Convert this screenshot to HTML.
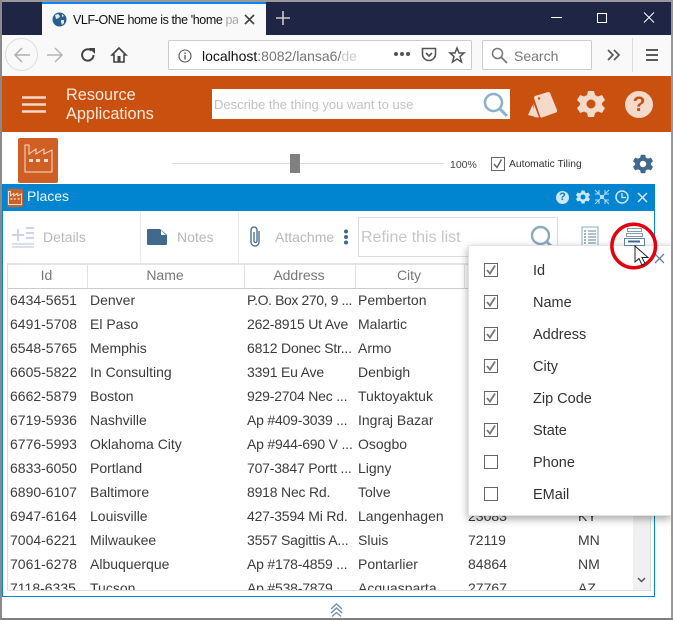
<!DOCTYPE html>
<html><head><meta charset="utf-8"><style>
html,body{margin:0;padding:0}
body{width:673px;height:620px;overflow:hidden;position:relative;background:#fff;font-family:"Liberation Sans",sans-serif;color:#333}
.a{position:absolute}
.t{position:absolute;white-space:nowrap;overflow:hidden}
.r{position:absolute;left:0;width:640px;height:24px;font-size:14px;line-height:24px;color:#3c3c3c}
.r span{position:absolute;white-space:nowrap;overflow:hidden}
.c1{left:2px}.c2{left:82px}.c3{left:239px;width:112px;letter-spacing:-.2px}.c4{left:350px}.c5{left:460px}.c6{left:570px}
.h{position:absolute;top:-1px;height:23px;line-height:23px;font-size:14px;color:#777;text-align:center;border-right:1px solid #e0e0e0;text-indent:-2px}
.cb{position:absolute;left:484px;width:12px;height:12px;border:1px solid #666;background:#fff}
.m{position:absolute;left:533px;font-size:14.5px;color:#333;line-height:20px}
svg{position:absolute;overflow:visible}
</style></head><body>
<!-- title bar -->
<div class="a" style="left:0;top:0;width:673px;height:2px;background:#999"></div>
<div class="a" style="left:2px;top:2px;width:669px;height:33px;background:#1f2544"></div>
<div class="a" style="left:42px;top:2px;width:224px;height:33px;background:#f9f9fa;border-top:2px solid #0a84ff;box-sizing:border-box"></div>
<svg style="left:52px;top:12px" width="15" height="15" viewBox="0 0 15 15"><circle cx="7.5" cy="7.5" r="7" fill="#2a5f8f"/><path d="M3 3l3-1 2 2-1 2-3 1zM9 8l3 0 0 3-2 2-1-3zM10 2l2 2-2 1z" fill="#dce8f2"/></svg>
<div class="t" style="left:73px;top:11px;width:165px;height:18px;font-size:12.500px;letter-spacing:-.4px;line-height:18px;color:#111">VLF-ONE home is the 'home <span style="color:#aaa">pa</span></div>
<svg style="left:244px;top:14px" width="11" height="11"><path d="M1 1L10 10M10 1L1 10" stroke="#444" stroke-width="1.6"/></svg>
<svg style="left:276px;top:11px" width="14" height="14"><path d="M7 0V14M0 7H14" stroke="#ccc" stroke-width="1.6"/></svg>
<svg style="left:551px;top:12px" width="120" height="12"><path d="M0 5.5H11" stroke="#fff" stroke-width="1"/><rect x="46.5" y="1.5" width="9" height="9" fill="none" stroke="#fff"/><path d="M93 0.5L103 10.5M103 0.5L93 10.5" stroke="#fff"/></svg>
<!-- toolbar -->
<div class="a" style="left:2px;top:35px;width:669px;height:41px;background:#f9f9fa"></div>
<div class="a" style="left:5px;top:38px;width:33px;height:33px;border:1px solid #ddd;border-radius:50%;box-sizing:border-box"></div>
<svg style="left:14px;top:47px" width="50" height="16"><path d="M1 8H16M8 1L1 8L8 15" fill="none" stroke="#b0b0b0" stroke-width="1.5"/><path d="M33 8H48M41 1L48 8L41 15" fill="none" stroke="#b5b5b5" stroke-width="1.5"/></svg>
<svg style="left:80px;top:47px" width="16" height="16" viewBox="0 0 16 16"><path d="M13.5 8A5.7 5.7 0 1 1 11.5 3.6" fill="none" stroke="#444" stroke-width="2"/><path d="M9 1H15V7Z" fill="#444"/></svg>
<svg style="left:111px;top:47px" width="16" height="16" viewBox="0 0 16 16"><path d="M8 1L1 8H3V15H13V8H15Z" fill="none" stroke="#444" stroke-width="1.6"/><rect x="6.5" y="9" width="3" height="6" fill="#444"/></svg>
<div class="a" style="left:168px;top:40px;width:304px;height:30px;background:#fff;border:1px solid #ccc;border-radius:2px;box-sizing:border-box"></div>
<svg style="left:178px;top:49px" width="14" height="14"><circle cx="7" cy="7" r="6" fill="none" stroke="#555" stroke-width="1.1"/><path d="M7 6V10.500M7 3.500V5" stroke="#555" stroke-width="1.3"/></svg>
<div class="t" style="left:202px;top:47px;width:156px;height:18px;font-size:14px;line-height:18px;color:#777"><span style="color:#111">localhost</span>:8082/lansa6/<span style="color:#ccc">de</span></div>
<svg style="left:393px;top:51px" width="18" height="6"><circle cx="3" cy="3" r="2" fill="#555"/><circle cx="9" cy="3" r="2" fill="#555"/><circle cx="15" cy="3" r="2" fill="#555"/></svg>
<svg style="left:421px;top:47px" width="16" height="16" viewBox="0 0 16 16"><path d="M1.500 1.500H14.500V7A6.500 6.500 0 0 1 1.500 7Z" fill="none" stroke="#555" stroke-width="1.600"/><path d="M5 6L8 9L11 6" fill="none" stroke="#555" stroke-width="1.600"/></svg>
<svg style="left:449px;top:47px" width="16" height="16" viewBox="0 0 16 16"><path d="M8 1L10 6H15L11 9.500L12.500 15L8 12L3.500 15L5 9.500L1 6H6Z" fill="none" stroke="#555" stroke-width="1.500"/></svg>
<div class="a" style="left:482px;top:40px;width:110px;height:30px;background:#fff;border:1px solid #ccc;border-radius:2px;box-sizing:border-box"></div>
<svg style="left:491px;top:47px" width="17" height="17"><circle cx="6.500" cy="6.500" r="5" fill="none" stroke="#777" stroke-width="1.500"/><path d="M10 10L16 16" stroke="#777" stroke-width="1.800"/></svg>
<div class="t" style="left:514px;top:47px;font-size:14px;line-height:18px;color:#777">Search</div>
<svg style="left:607px;top:49px" width="14" height="12"><path d="M1 1L6 6L1 11M7 1L12 6L7 11" fill="none" stroke="#555" stroke-width="1.600"/></svg>
<div class="a" style="left:632px;top:38px;width:1px;height:34px;background:#ddd"></div>
<svg style="left:646px;top:49px" width="13" height="12"><path d="M0 1H12M0 6H12M0 11H12" stroke="#444" stroke-width="1.700"/></svg>
<!-- orange header -->
<div class="a" style="left:2px;top:76px;width:669px;height:56px;background:#c9500e"></div>
<svg style="left:22px;top:96px" width="25" height="17"><path d="M0 1.500H24M0 8.500H24M0 15.500H24" stroke="#f6d9c8" stroke-width="2.600"/></svg>
<div class="t" style="left:66px;top:86px;font-size:16.300px;line-height:19px;color:#fbe9dd">Resource<br>Applications</div>
<div class="a" style="left:212px;top:89px;width:298px;height:30px;background:#fff"></div>
<div class="t" style="left:214px;top:96px;font-size:13px;line-height:17px;color:#c2c2c2">Describe the thing you want to use</div>
<svg style="left:483px;top:92px" width="25" height="25"><circle cx="10.500" cy="10.500" r="8.500" fill="none" stroke="#8fb0ca" stroke-width="2.600"/><path d="M16.500 16.500L24 24" stroke="#8fb0ca" stroke-width="3"/></svg>
<svg style="left:528px;top:92px" width="30" height="26" viewBox="0 0 30 26"><path d="M7 4L20 0Q22 0 22.500 2L29 18Q29.500 20 28 20.500L14 25.500Q12.500 26 12 24L6 6Q6 4.500 7 4Z" fill="#f5d9cb"/><circle cx="11" cy="6.500" r="1.200" fill="#c9500e"/><path d="M0 23L4.500 13L8 25ZM6 25L5.500 11L11 25.500Z" fill="#f5d9cb"/></svg>
<svg style="left:577px;top:90px" width="28" height="28" viewBox="0 0 28 28"><path d="M11 1H17L18 5L21 6.500L25 5L28 10L25 13V15L28 18L25 23L21 21.500L18 23L17 27H11L10 23L7 21.500L3 23L0 18L3 15V13L0 10L3 5L7 6.500L10 5Z" fill="#f5d9cb"/><circle cx="14" cy="14" r="4.500" fill="#c9500e"/></svg>
<div class="a" style="left:625px;top:91px;width:28px;height:27px;border-radius:50%;background:#f5d9cb;text-align:center;font-size:21px;line-height:27px;font-weight:bold;color:#c9500e">?</div>
<!-- sub bar -->
<div class="a" style="left:18px;top:138px;width:40px;height:45px;background:#cf5f25;border-radius:2px"></div>
<svg style="left:24px;top:144px" width="29" height="29" viewBox="0 0 29 29"><path d="M1 28V1H5V10L12 5V10L20 5V10L28 6V28Z" fill="none" stroke="#f7dccb" stroke-width="1"/><rect x="5" y="15" width="4" height="3" fill="#f7dccb"/><rect x="12" y="15" width="4" height="3" fill="#f7dccb"/><rect x="20" y="15" width="4" height="3" fill="#f7dccb"/></svg>
<div class="a" style="left:172px;top:163px;width:272px;height:1px;background:#ddd"></div>
<div class="a" style="left:290px;top:154px;width:10px;height:19px;background:#808080"></div>
<div class="t" style="left:450px;top:158px;font-size:10.500px;line-height:14px;color:#444">100%</div>
<div class="a" style="left:491px;top:157px;width:12px;height:12px;border:1px solid #666"></div>
<svg style="left:493px;top:159px" width="10" height="10"><path d="M1 5L4 8.500L8.500 0.500" fill="none" stroke="#666" stroke-width="1.500"/></svg>
<div class="t" style="left:509px;top:158px;font-size:10.300px;line-height:14px;color:#333">Automatic Tiling</div>
<svg style="left:633px;top:154px" width="20" height="20" viewBox="0 0 28 28"><path d="M11 1H17L18 5L21 6.500L25 5L28 10L25 13V15L28 18L25 23L21 21.500L18 23L17 27H11L10 23L7 21.500L3 23L0 18L3 15V13L0 10L3 5L7 6.500L10 5Z" fill="#41688f"/><circle cx="14" cy="14" r="4.500" fill="#fff"/></svg>
<!-- places panel -->
<div class="a" style="left:2px;top:184px;width:653px;height:413px;border:1px solid #0285d0;border-top:0;box-sizing:border-box"></div>
<div class="a" style="left:2px;top:184px;width:653px;height:27px;background:#0285d0"></div>
<div class="a" style="left:7px;top:189px;width:16px;height:18px;background:#c9602a;border-radius:2px"></div>
<svg style="left:8px;top:191px" width="14" height="14" viewBox="0 0 29 29"><path d="M1 28V1H5V10L12 5V10L20 5V10L28 6V28Z" fill="none" stroke="#f7dccb" stroke-width="2"/><rect x="5" y="15" width="4" height="3" fill="#f7dccb"/><rect x="12" y="15" width="4" height="3" fill="#f7dccb"/><rect x="20" y="15" width="4" height="3" fill="#f7dccb"/></svg>
<div class="t" style="left:27px;top:187px;font-size:14px;line-height:18px;color:#f0f7fc">Places</div>
<div class="a" style="left:556px;top:191px;width:13px;height:13px;border-radius:50%;background:#cfe6f5;text-align:center;font-size:11px;line-height:13px;font-weight:bold;color:#0285d0">?</div>
<svg style="left:576px;top:190px" width="14" height="14" viewBox="0 0 28 28"><path d="M11 1H17L18 5L21 6.500L25 5L28 10L25 13V15L28 18L25 23L21 21.500L18 23L17 27H11L10 23L7 21.500L3 23L0 18L3 15V13L0 10L3 5L7 6.500L10 5Z" fill="#cfe6f5"/><circle cx="14" cy="14" r="5" fill="#0285d0"/></svg>
<svg style="left:595px;top:190px" width="14" height="14"><path d="M0 0L5 5M14 0L9 5M0 14L5 9M14 14L9 9M0 4H4V0M14 4H10V0M0 10H4V14M14 10H10V14" fill="none" stroke="#b9dcf2" stroke-width="1"/><rect x="5" y="5" width="4" height="4" fill="#b9dcf2"/></svg>
<svg style="left:615px;top:190px" width="14" height="14"><circle cx="7" cy="7" r="6" fill="none" stroke="#cfe6f5" stroke-width="1.500"/><path d="M7 3V7.500H11" fill="none" stroke="#cfe6f5" stroke-width="1.300"/></svg>
<svg style="left:637px;top:192px" width="11" height="11"><path d="M1 1L10 10M10 1L1 10" stroke="#d8ecf8" stroke-width="1.500"/></svg>
<!-- command bar -->
<svg style="left:12px;top:226px" width="23" height="22"><path d="M0 9H12M6 3V15" stroke="#ccd6e2" stroke-width="2"/><path d="M14 2H22M14 7H22M14 12H22" stroke="#ccd6e2" stroke-width="2"/><path d="M0 18H22M0 21H22" stroke="#ccd6e2" stroke-width="1.500"/></svg>
<div class="t" style="left:43px;top:228px;font-size:14px;line-height:18px;color:#b5b9bd">Details</div>
<div class="a" style="left:140px;top:211px;width:1px;height:52px;background:#eaeaea"></div>
<svg style="left:147px;top:229px" width="20" height="16"><path d="M1 0H13L20 6V15Q20 16 19 16H1Q0 16 0 15V1Q0 0 1 0Z" fill="#41688f"/><path d="M14 1.500V6H19Z" fill="#fff"/></svg>
<div class="t" style="left:177px;top:228px;font-size:14px;line-height:18px;color:#b5b9bd">Notes</div>
<div class="a" style="left:238px;top:211px;width:1px;height:52px;background:#eaeaea"></div>
<svg style="left:249px;top:226px" width="13" height="22" viewBox="0 0 13 22"><path d="M10 5V16A4 4 0 0 1 2 16V4A3 3 0 0 1 8 4V15A1.300 1.300 0 0 1 5 15V6" fill="none" stroke="#41688f" stroke-width="1.300"/></svg>
<div class="t" style="left:275px;top:228px;width:59px;height:18px;font-size:14px;line-height:18px;color:#b5b9bd">Attachments</div>
<svg style="left:343px;top:229px" width="6" height="16"><circle cx="3" cy="2.500" r="2" fill="#41688f"/><circle cx="3" cy="8" r="2" fill="#41688f"/><circle cx="3" cy="13.500" r="2" fill="#41688f"/></svg>
<div class="a" style="left:358px;top:217px;width:200px;height:40px;border:1px solid #ddd;box-sizing:border-box"></div>
<div class="t" style="left:361px;top:227px;font-size:16px;line-height:21px;color:#c6c6c6">Refine this list</div>
<svg style="left:530px;top:225px" width="24" height="24"><circle cx="10.500" cy="10.500" r="8.500" fill="none" stroke="#8fa8c0" stroke-width="2.400"/><path d="M17 17L24 24" stroke="#8fa8c0" stroke-width="2.800"/></svg>
<svg style="left:581px;top:226px" width="18" height="21"><rect x="1" y="1" width="16" height="19" fill="none" stroke="#8fa8c0" stroke-width="1"/><path d="M3 5H5M3 8H5M3 11H5M3 14H5M3 17H5" stroke="#41688f"/><path d="M7 5H15M7 8H15M7 11H15M7 14H15M7 17H15" stroke="#5f81a3"/></svg>
<!-- grid -->
<div class="a" style="left:7px;top:263px;width:644px;height:328px;border:1px solid #dcdcdc;border-top:2px solid #e4e4e4;box-sizing:border-box;overflow:hidden;background:#fff">
 <div class="a" style="left:0;top:0;width:642px;height:24px;border-bottom:1px solid #ccc;box-sizing:border-box">
  <div class="h" style="left:0;width:79px;height:24px">Id</div>
  <div class="h" style="left:80px;width:156px;height:24px">Name</div>
  <div class="h" style="left:237px;width:110px;height:24px">Address</div>
  <div class="h" style="left:348px;width:108px;height:24px">City</div>
 </div>
 <div class="r" style="top:23px"><span class="c1">6434-5651</span><span class="c2">Denver</span><span class="c3" style="letter-spacing:-.4px">P.O. Box 270, 9 ...</span><span class="c4">Pemberton</span></div>
 <div class="r" style="top:47px"><span class="c1">6491-5708</span><span class="c2">El Paso</span><span class="c3">262-8915 Ut Ave</span><span class="c4">Malartic</span></div>
 <div class="r" style="top:71px"><span class="c1">6548-5765</span><span class="c2">Memphis</span><span class="c3">6812 Donec Str...</span><span class="c4">Armo</span></div>
 <div class="r" style="top:95px"><span class="c1">6605-5822</span><span class="c2">In Consulting</span><span class="c3">3391 Eu Ave</span><span class="c4">Denbigh</span></div>
 <div class="r" style="top:119px"><span class="c1">6662-5879</span><span class="c2">Boston</span><span class="c3">929-2704 Nec ...</span><span class="c4">Tuktoyaktuk</span></div>
 <div class="r" style="top:143px"><span class="c1">6719-5936</span><span class="c2">Nashville</span><span class="c3">Ap #409-3039 ...</span><span class="c4">Ingraj Bazar</span></div>
 <div class="r" style="top:167px"><span class="c1">6776-5993</span><span class="c2">Oklahoma City</span><span class="c3">Ap #944-690 V ...</span><span class="c4">Osogbo</span></div>
 <div class="r" style="top:191px"><span class="c1">6833-6050</span><span class="c2">Portland</span><span class="c3">707-3847 Portt ...</span><span class="c4">Ligny</span></div>
 <div class="r" style="top:215px"><span class="c1">6890-6107</span><span class="c2">Baltimore</span><span class="c3">8918 Nec Rd.</span><span class="c4">Tolve</span></div>
 <div class="r" style="top:239px"><span class="c1">6947-6164</span><span class="c2">Louisville</span><span class="c3">427-3594 Mi Rd.</span><span class="c4">Langenhagen</span><span class="c5">23083</span><span class="c6">KY</span></div>
 <div class="r" style="top:263px"><span class="c1">7004-6221</span><span class="c2">Milwaukee</span><span class="c3">3557 Sagittis A...</span><span class="c4">Sluis</span><span class="c5">72119</span><span class="c6">MN</span></div>
 <div class="r" style="top:287px"><span class="c1">7061-6278</span><span class="c2">Albuquerque</span><span class="c3">Ap #178-4859 ...</span><span class="c4">Pontarlier</span><span class="c5">84864</span><span class="c6">NM</span></div>
 <div class="r" style="top:311px"><span class="c1">7118-6335</span><span class="c2">Tucson</span><span class="c3">Ap #538-7879 ...</span><span class="c4">Acquasparta</span><span class="c5">27767</span><span class="c6">AZ</span></div>
 <div class="a" style="left:625px;top:0;width:17px;height:326px;background:#f0f0f0"></div>
 <svg style="left:629px;top:312px" width="9" height="6"><path d="M1 1L4.500 4.500L8 1" fill="none" stroke="#555" stroke-width="1.500"/></svg>
</div>
<!-- popup -->
<div class="a" style="left:468px;top:245px;width:203px;height:271px;background:#fff;border:1px solid #e2e2e2;border-right:0;box-sizing:border-box;box-shadow:0 3px 8px rgba(0,0,0,.35)"></div>
<div class="cb" style="top:263px"></div><div class="m" style="top:261px">Id</div>
<div class="cb" style="top:295px"></div><div class="m" style="top:293px">Name</div>
<div class="cb" style="top:327px"></div><div class="m" style="top:325px">Address</div>
<div class="cb" style="top:359px"></div><div class="m" style="top:357px">City</div>
<div class="cb" style="top:391px"></div><div class="m" style="top:389px">Zip Code</div>
<div class="cb" style="top:423px"></div><div class="m" style="top:421px">State</div>
<div class="cb" style="top:455px"></div><div class="m" style="top:453px">Phone</div>
<div class="cb" style="top:487px"></div><div class="m" style="top:485px">EMail</div>
<svg style="left:484px;top:263px" width="14" height="174"><g fill="none" stroke="#777" stroke-width="1.800"><path d="M3 7L6 10.500L11 2.500"/><path d="M3 39L6 42.500L11 34.500"/><path d="M3 71L6 74.500L11 66.500"/><path d="M3 103L6 106.500L11 98.500"/><path d="M3 135L6 138.500L11 130.500"/><path d="M3 167L6 170.500L11 162.500"/></g></svg>
<svg style="left:654px;top:253px" width="11" height="11"><path d="M1 1L10 10M10 1L1 10" stroke="#5f81a3" stroke-width="1.300"/></svg>
<!-- highlighted icon -->
<svg style="left:608px;top:221px" width="52" height="52"><circle cx="25.700" cy="25" r="21.800" fill="none" stroke="#e3000f" stroke-width="3.500"/><rect x="19.500" y="7.500" width="14" height="3" fill="#fff" stroke="#7f9bb5"/><rect x="18.500" y="12.500" width="16" height="3" fill="#fff" stroke="#7f9bb5"/><rect x="16.500" y="17.500" width="20" height="7" fill="#fff" stroke="#5f81a3"/><path d="M20 20.500H32" stroke="#41688f" stroke-width="2"/></svg>
<svg style="left:634px;top:245px" width="17" height="22" viewBox="0 0 17 22"><path d="M1 1V17L5 13.500L8 20L11 18.500L8 12.500H14Z" fill="#fff" stroke="#222" stroke-width="1"/></svg>
<!-- footer -->
<svg style="left:330px;top:603px" width="13" height="14"><path d="M1 6L6.500 1L12 6M1 10L6.500 5L12 10M2 13.500L6.500 9.500L11 13.500" fill="none" stroke="#6f93b5" stroke-width="1.400"/></svg>
<!-- window border -->
<div class="a" style="left:0;top:0;width:2px;height:620px;background:#8a8a8a"></div>
<div class="a" style="left:671px;top:0;width:2px;height:620px;background:#999"></div>
<div class="a" style="left:0;top:618px;width:673px;height:2px;background:#7f7f7f"></div>
</body></html>
